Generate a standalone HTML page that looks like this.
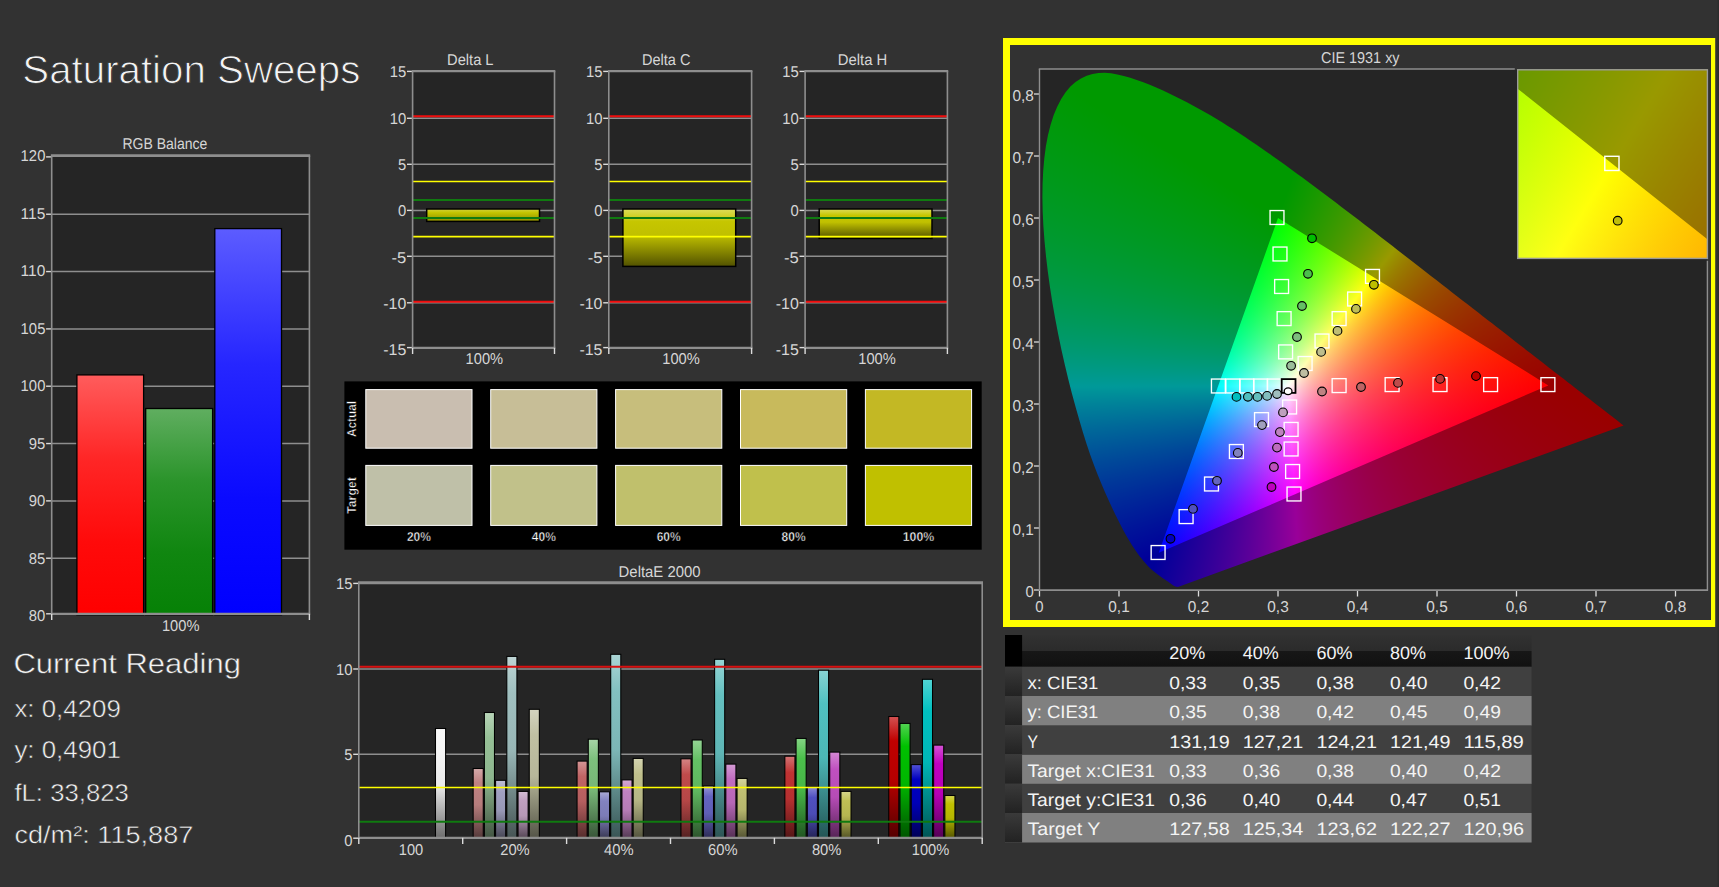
<!DOCTYPE html>
<html><head><meta charset="utf-8"><title>Saturation Sweeps</title>
<style>
html,body{margin:0;padding:0;background:#323232;overflow:hidden}
#p{position:relative;width:1719px;height:887px;overflow:hidden;background:#323232;font-family:"Liberation Sans", sans-serif}
svg{position:absolute;left:0;top:0;font-family:"Liberation Sans", sans-serif;text-rendering:geometricPrecision}
.c{position:absolute;overflow:hidden;background:#252525}
.l{position:absolute;left:0;top:0;right:0;bottom:0}
</style></head><body><div id="p">
<svg width="1719" height="887" viewBox="0 0 1719 887"><defs><linearGradient id="g1" x1="0" y1="0" x2="0" y2="1"><stop offset="0" stop-color="#ff5c5c"/><stop offset="0.35" stop-color="#ff2626"/><stop offset="0.7" stop-color="#ff0a0a"/><stop offset="1" stop-color="#ff0000"/></linearGradient><linearGradient id="g2" x1="0" y1="0" x2="0" y2="1"><stop offset="0" stop-color="#60ae60"/><stop offset="0.35" stop-color="#2b942b"/><stop offset="0.7" stop-color="#108610"/><stop offset="1" stop-color="#068106"/></linearGradient><linearGradient id="g3" x1="0" y1="0" x2="0" y2="1"><stop offset="0" stop-color="#5c5cff"/><stop offset="0.35" stop-color="#2626ff"/><stop offset="0.7" stop-color="#0a0aff"/><stop offset="1" stop-color="#0000ff"/></linearGradient><linearGradient id="g4" x1="0" y1="0" x2="0" y2="1"><stop offset="0" stop-color="#dcdc5a"/><stop offset="0.22" stop-color="#c6c600"/><stop offset="0.45" stop-color="#c0c000"/><stop offset="1" stop-color="#525200"/></linearGradient><linearGradient id="g5" x1="0" y1="0" x2="0" y2="1"><stop offset="0" stop-color="#d2d23c"/><stop offset="0.3" stop-color="#c4c400"/><stop offset="1" stop-color="#8c8c00"/></linearGradient><linearGradient id="g6" x1="0" y1="0" x2="0" y2="1"><stop offset="0" stop-color="#dcdc5a"/><stop offset="0.22" stop-color="#c6c600"/><stop offset="0.45" stop-color="#c0c000"/><stop offset="1" stop-color="#525200"/></linearGradient><linearGradient id="g7" x1="0" y1="0" x2="0" y2="1"><stop offset="0" stop-color="#dcdc5a"/><stop offset="0.22" stop-color="#c6c600"/><stop offset="0.45" stop-color="#c0c000"/><stop offset="1" stop-color="#525200"/></linearGradient><linearGradient id="g8" x1="0" y1="0" x2="0" y2="1"><stop offset="0" stop-color="#f9f9f9"/><stop offset="0.2" stop-color="#f6f6f6"/><stop offset="0.52" stop-color="#eaeaea"/><stop offset="1" stop-color="#6c6c6c"/></linearGradient><linearGradient id="g9" x1="0" y1="0" x2="0" y2="1"><stop offset="0" stop-color="#d4aaaa"/><stop offset="0.2" stop-color="#c08282"/><stop offset="0.52" stop-color="#b67c7c"/><stop offset="1" stop-color="#543939"/></linearGradient><linearGradient id="g10" x1="0" y1="0" x2="0" y2="1"><stop offset="0" stop-color="#b8d4b8"/><stop offset="0.2" stop-color="#96c096"/><stop offset="0.52" stop-color="#8eb68e"/><stop offset="1" stop-color="#425442"/></linearGradient><linearGradient id="g11" x1="0" y1="0" x2="0" y2="1"><stop offset="0" stop-color="#bebed4"/><stop offset="0.2" stop-color="#a0a0c0"/><stop offset="0.52" stop-color="#9898b6"/><stop offset="1" stop-color="#464654"/></linearGradient><linearGradient id="g12" x1="0" y1="0" x2="0" y2="1"><stop offset="0" stop-color="#bed4d4"/><stop offset="0.2" stop-color="#a0c0c0"/><stop offset="0.52" stop-color="#98b6b6"/><stop offset="1" stop-color="#465454"/></linearGradient><linearGradient id="g13" x1="0" y1="0" x2="0" y2="1"><stop offset="0" stop-color="#d4bed4"/><stop offset="0.2" stop-color="#c0a0c0"/><stop offset="0.52" stop-color="#b698b6"/><stop offset="1" stop-color="#544654"/></linearGradient><linearGradient id="g14" x1="0" y1="0" x2="0" y2="1"><stop offset="0" stop-color="#d4d4c0"/><stop offset="0.2" stop-color="#c0c0a2"/><stop offset="0.52" stop-color="#b6b69a"/><stop offset="1" stop-color="#545447"/></linearGradient><linearGradient id="g15" x1="0" y1="0" x2="0" y2="1"><stop offset="0" stop-color="#d49696"/><stop offset="0.2" stop-color="#c06464"/><stop offset="0.52" stop-color="#b65f5f"/><stop offset="1" stop-color="#542c2c"/></linearGradient><linearGradient id="g16" x1="0" y1="0" x2="0" y2="1"><stop offset="0" stop-color="#a7d4a7"/><stop offset="0.2" stop-color="#7dc07d"/><stop offset="0.52" stop-color="#77b677"/><stop offset="1" stop-color="#375437"/></linearGradient><linearGradient id="g17" x1="0" y1="0" x2="0" y2="1"><stop offset="0" stop-color="#aaaad4"/><stop offset="0.2" stop-color="#8282c0"/><stop offset="0.52" stop-color="#7c7cb6"/><stop offset="1" stop-color="#393954"/></linearGradient><linearGradient id="g18" x1="0" y1="0" x2="0" y2="1"><stop offset="0" stop-color="#aad4d4"/><stop offset="0.2" stop-color="#82c0c0"/><stop offset="0.52" stop-color="#7cb6b6"/><stop offset="1" stop-color="#395454"/></linearGradient><linearGradient id="g19" x1="0" y1="0" x2="0" y2="1"><stop offset="0" stop-color="#d4aad4"/><stop offset="0.2" stop-color="#c082c0"/><stop offset="0.52" stop-color="#b67cb6"/><stop offset="1" stop-color="#543954"/></linearGradient><linearGradient id="g20" x1="0" y1="0" x2="0" y2="1"><stop offset="0" stop-color="#d4d4b1"/><stop offset="0.2" stop-color="#c0c08c"/><stop offset="0.52" stop-color="#b6b685"/><stop offset="1" stop-color="#54543e"/></linearGradient><linearGradient id="g21" x1="0" y1="0" x2="0" y2="1"><stop offset="0" stop-color="#d48585"/><stop offset="0.2" stop-color="#c04b4b"/><stop offset="0.52" stop-color="#b64747"/><stop offset="1" stop-color="#542121"/></linearGradient><linearGradient id="g22" x1="0" y1="0" x2="0" y2="1"><stop offset="0" stop-color="#96d496"/><stop offset="0.2" stop-color="#64c064"/><stop offset="0.52" stop-color="#5fb65f"/><stop offset="1" stop-color="#2c542c"/></linearGradient><linearGradient id="g23" x1="0" y1="0" x2="0" y2="1"><stop offset="0" stop-color="#9696d4"/><stop offset="0.2" stop-color="#6464c0"/><stop offset="0.52" stop-color="#5f5fb6"/><stop offset="1" stop-color="#2c2c54"/></linearGradient><linearGradient id="g24" x1="0" y1="0" x2="0" y2="1"><stop offset="0" stop-color="#96d4d4"/><stop offset="0.2" stop-color="#64c0c0"/><stop offset="0.52" stop-color="#5fb6b6"/><stop offset="1" stop-color="#2c5454"/></linearGradient><linearGradient id="g25" x1="0" y1="0" x2="0" y2="1"><stop offset="0" stop-color="#d49bd4"/><stop offset="0.2" stop-color="#c06cc0"/><stop offset="0.52" stop-color="#b667b6"/><stop offset="1" stop-color="#543054"/></linearGradient><linearGradient id="g26" x1="0" y1="0" x2="0" y2="1"><stop offset="0" stop-color="#d4d4a0"/><stop offset="0.2" stop-color="#c0c073"/><stop offset="0.52" stop-color="#b6b66d"/><stop offset="1" stop-color="#545433"/></linearGradient><linearGradient id="g27" x1="0" y1="0" x2="0" y2="1"><stop offset="0" stop-color="#d47474"/><stop offset="0.2" stop-color="#c03232"/><stop offset="0.52" stop-color="#b63030"/><stop offset="1" stop-color="#541616"/></linearGradient><linearGradient id="g28" x1="0" y1="0" x2="0" y2="1"><stop offset="0" stop-color="#85d485"/><stop offset="0.2" stop-color="#4bc04b"/><stop offset="0.52" stop-color="#47b647"/><stop offset="1" stop-color="#215421"/></linearGradient><linearGradient id="g29" x1="0" y1="0" x2="0" y2="1"><stop offset="0" stop-color="#8888d4"/><stop offset="0.2" stop-color="#5050c0"/><stop offset="0.52" stop-color="#4c4cb6"/><stop offset="1" stop-color="#232354"/></linearGradient><linearGradient id="g30" x1="0" y1="0" x2="0" y2="1"><stop offset="0" stop-color="#88d4d4"/><stop offset="0.2" stop-color="#50c0c0"/><stop offset="0.52" stop-color="#4cb6b6"/><stop offset="1" stop-color="#235454"/></linearGradient><linearGradient id="g31" x1="0" y1="0" x2="0" y2="1"><stop offset="0" stop-color="#d488d4"/><stop offset="0.2" stop-color="#c050c0"/><stop offset="0.52" stop-color="#b64cb6"/><stop offset="1" stop-color="#542354"/></linearGradient><linearGradient id="g32" x1="0" y1="0" x2="0" y2="1"><stop offset="0" stop-color="#d4d48b"/><stop offset="0.2" stop-color="#c0c055"/><stop offset="0.52" stop-color="#b6b651"/><stop offset="1" stop-color="#545425"/></linearGradient><linearGradient id="g33" x1="0" y1="0" x2="0" y2="1"><stop offset="0" stop-color="#d45252"/><stop offset="0.2" stop-color="#c00000"/><stop offset="0.52" stop-color="#b60000"/><stop offset="1" stop-color="#540000"/></linearGradient><linearGradient id="g34" x1="0" y1="0" x2="0" y2="1"><stop offset="0" stop-color="#52d452"/><stop offset="0.2" stop-color="#00c000"/><stop offset="0.52" stop-color="#00b600"/><stop offset="1" stop-color="#005400"/></linearGradient><linearGradient id="g35" x1="0" y1="0" x2="0" y2="1"><stop offset="0" stop-color="#5252d4"/><stop offset="0.2" stop-color="#0000c0"/><stop offset="0.52" stop-color="#0000b6"/><stop offset="1" stop-color="#000054"/></linearGradient><linearGradient id="g36" x1="0" y1="0" x2="0" y2="1"><stop offset="0" stop-color="#52d4d4"/><stop offset="0.2" stop-color="#00c0c0"/><stop offset="0.52" stop-color="#00b6b6"/><stop offset="1" stop-color="#005454"/></linearGradient><linearGradient id="g37" x1="0" y1="0" x2="0" y2="1"><stop offset="0" stop-color="#d452d4"/><stop offset="0.2" stop-color="#c000c0"/><stop offset="0.52" stop-color="#b600b6"/><stop offset="1" stop-color="#540054"/></linearGradient><linearGradient id="g38" x1="0" y1="0" x2="0" y2="1"><stop offset="0" stop-color="#d4d452"/><stop offset="0.2" stop-color="#c0c000"/><stop offset="0.52" stop-color="#b6b600"/><stop offset="1" stop-color="#545400"/></linearGradient><linearGradient id="g39" x1="0" y1="0" x2="0" y2="1"><stop offset="0" stop-color="#313131"/><stop offset="0.49" stop-color="#2b2b2b"/><stop offset="0.51" stop-color="#171717"/><stop offset="1" stop-color="#111111"/></linearGradient><linearGradient id="g40" x1="0" y1="0" x2="0" y2="1"><stop offset="0" stop-color="#3a3a3a"/><stop offset="1" stop-color="#222222"/></linearGradient></defs>
<text x="22.3" y="83" font-size="39" fill="#f4f4f4" textLength="338" lengthAdjust="spacingAndGlyphs" stroke="#323232" stroke-width="0.9">Saturation Sweeps</text>
<rect x="51.7" y="155.6" width="257.7" height="458.2" fill="#252525"/>
<path d="M51.7 214.23H309.4" stroke="#8e8e8e" stroke-width="1.5"/>
<path d="M51.7 271.56H309.4" stroke="#8e8e8e" stroke-width="1.5"/>
<path d="M51.7 328.89H309.4" stroke="#8e8e8e" stroke-width="1.5"/>
<path d="M51.7 386.22H309.4" stroke="#8e8e8e" stroke-width="1.5"/>
<path d="M51.7 443.55H309.4" stroke="#8e8e8e" stroke-width="1.5"/>
<path d="M51.7 500.88H309.4" stroke="#8e8e8e" stroke-width="1.5"/>
<path d="M51.7 558.21H309.4" stroke="#8e8e8e" stroke-width="1.5"/>
<rect x="76.9" y="374.9" width="66.7" height="239.9" fill="url(#g1)" stroke="#000" stroke-width="1.3"/>
<rect x="145.7" y="408.5" width="66.9" height="206.3" fill="url(#g2)" stroke="#000" stroke-width="1.3"/>
<rect x="214.8" y="228.6" width="66.7" height="386.2" fill="url(#g3)" stroke="#000" stroke-width="1.3"/>
<path d="M50.9 155.6H310.2" stroke="#8e8e8e" stroke-width="2.9"/>
<path d="M50.9 613.8H310.2" stroke="#8e8e8e" stroke-width="2.2"/>
<path d="M51.7 155.6V613.8" stroke="#8e8e8e" stroke-width="1.6"/>
<path d="M309.4 155.6V613.8" stroke="#8e8e8e" stroke-width="1.6"/>
<path d="M46.1 156.9H50.9" stroke="#dcdcdc" stroke-width="1.4"/>
<text x="45.4" y="161" font-size="15.7" fill="#d6d6d6" text-anchor="end" textLength="24.79" lengthAdjust="spacingAndGlyphs">120</text>
<path d="M46.1 214.23H50.9" stroke="#dcdcdc" stroke-width="1.4"/>
<text x="45.4" y="218.5" font-size="15.7" fill="#d6d6d6" text-anchor="end" textLength="24.79" lengthAdjust="spacingAndGlyphs">115</text>
<path d="M46.1 271.56H50.9" stroke="#dcdcdc" stroke-width="1.4"/>
<text x="45.4" y="276" font-size="15.7" fill="#d6d6d6" text-anchor="end" textLength="24.79" lengthAdjust="spacingAndGlyphs">110</text>
<path d="M46.1 328.89H50.9" stroke="#dcdcdc" stroke-width="1.4"/>
<text x="45.4" y="333.5" font-size="15.7" fill="#d6d6d6" text-anchor="end" textLength="24.79" lengthAdjust="spacingAndGlyphs">105</text>
<path d="M46.1 386.22H50.9" stroke="#dcdcdc" stroke-width="1.4"/>
<text x="45.4" y="391" font-size="15.7" fill="#d6d6d6" text-anchor="end" textLength="24.79" lengthAdjust="spacingAndGlyphs">100</text>
<path d="M46.1 443.55H50.9" stroke="#dcdcdc" stroke-width="1.4"/>
<text x="45.4" y="448.5" font-size="15.7" fill="#d6d6d6" text-anchor="end" textLength="16.53" lengthAdjust="spacingAndGlyphs">95</text>
<path d="M46.1 500.88H50.9" stroke="#dcdcdc" stroke-width="1.4"/>
<text x="45.4" y="506" font-size="15.7" fill="#d6d6d6" text-anchor="end" textLength="16.53" lengthAdjust="spacingAndGlyphs">90</text>
<path d="M46.1 558.21H50.9" stroke="#dcdcdc" stroke-width="1.4"/>
<text x="45.4" y="563.5" font-size="15.7" fill="#d6d6d6" text-anchor="end" textLength="16.53" lengthAdjust="spacingAndGlyphs">85</text>
<path d="M46.1 613.8H50.9" stroke="#dcdcdc" stroke-width="1.4"/>
<text x="45.4" y="621" font-size="15.7" fill="#d6d6d6" text-anchor="end" textLength="16.53" lengthAdjust="spacingAndGlyphs">80</text>
<path d="M51.7 613.8V620" stroke="#dcdcdc" stroke-width="1.4"/>
<path d="M309.4 613.8V620" stroke="#dcdcdc" stroke-width="1.4"/>
<text x="164.9" y="148.8" font-size="15.7" fill="#d6d6d6" text-anchor="middle" textLength="85" lengthAdjust="spacingAndGlyphs">RGB Balance</text>
<text x="180.7" y="631" font-size="15.7" fill="#d6d6d6" text-anchor="middle" textLength="37.5" lengthAdjust="spacingAndGlyphs">100%</text>
<text x="13.4" y="673.3" font-size="28" fill="#f4f4f4" textLength="227.6" lengthAdjust="spacingAndGlyphs" stroke="#323232" stroke-width="0.5">Current Reading</text>
<text x="14.4" y="716.6" font-size="24.5" fill="#f4f4f4" textLength="106.5" lengthAdjust="spacingAndGlyphs" stroke="#323232" stroke-width="0.5">x: 0,4209</text>
<text x="14.4" y="758.4" font-size="24.5" fill="#f4f4f4" textLength="106.5" lengthAdjust="spacingAndGlyphs" stroke="#323232" stroke-width="0.5">y: 0,4901</text>
<text x="14.4" y="800.5" font-size="24.5" fill="#f4f4f4" textLength="114.5" lengthAdjust="spacingAndGlyphs" stroke="#323232" stroke-width="0.5">fL: 33,823</text>
<text x="14.4" y="842.7" font-size="24.5" fill="#f4f4f4" textLength="179" lengthAdjust="spacingAndGlyphs" stroke="#323232" stroke-width="0.5">cd/m²: 115,887</text>
<rect x="412.6" y="71.1" width="141.9" height="276.7" fill="#252525"/>
<path d="M412.6 118.3H554.5" stroke="#8e8e8e" stroke-width="1.5"/>
<path d="M412.6 164.3H554.5" stroke="#8e8e8e" stroke-width="1.5"/>
<path d="M412.6 210.4H554.5" stroke="#8e8e8e" stroke-width="1.5"/>
<path d="M412.6 256.3H554.5" stroke="#8e8e8e" stroke-width="1.5"/>
<path d="M412.6 302.8H554.5" stroke="#8e8e8e" stroke-width="1.5"/>
<rect x="426.7" y="209" width="112.8" height="12.4" fill="url(#g5)" stroke="#000" stroke-width="1.5"/>
<path d="M412.6 116.3H554.5" stroke="#f00c0c" stroke-width="1.9"/>
<path d="M412.6 301.8H554.5" stroke="#f00c0c" stroke-width="1.9"/>
<path d="M412.6 181.5H554.5" stroke="#ffff00" stroke-width="1.6"/>
<path d="M412.6 236.6H554.5" stroke="#ffff00" stroke-width="1.6"/>
<path d="M412.6 199.9H554.5" stroke="#107a10" stroke-width="2"/>
<path d="M412.6 218H554.5" stroke="#107a10" stroke-width="2"/>
<path d="M411.8 71.1H555.3" stroke="#8e8e8e" stroke-width="2.1"/>
<path d="M411.8 347.8H555.3" stroke="#8e8e8e" stroke-width="2.2"/>
<path d="M412.6 71.1V347.8" stroke="#8e8e8e" stroke-width="1.6"/>
<path d="M554.5 71.1V347.8" stroke="#8e8e8e" stroke-width="1.6"/>
<path d="M407 71.4H411.8" stroke="#dcdcdc" stroke-width="1.4"/>
<text x="406.3" y="77.45" font-size="15.7" fill="#d6d6d6" text-anchor="end" textLength="16.53" lengthAdjust="spacingAndGlyphs">15</text>
<path d="M407 118.3H411.8" stroke="#dcdcdc" stroke-width="1.4"/>
<text x="406.3" y="123.72" font-size="15.7" fill="#d6d6d6" text-anchor="end" textLength="16.53" lengthAdjust="spacingAndGlyphs">10</text>
<path d="M407 164.3H411.8" stroke="#dcdcdc" stroke-width="1.4"/>
<text x="406.3" y="170" font-size="15.7" fill="#d6d6d6" text-anchor="end" textLength="8.26" lengthAdjust="spacingAndGlyphs">5</text>
<path d="M407 210.4H411.8" stroke="#dcdcdc" stroke-width="1.4"/>
<text x="406.3" y="216.28" font-size="15.7" fill="#d6d6d6" text-anchor="end" textLength="8.26" lengthAdjust="spacingAndGlyphs">0</text>
<path d="M407 256.3H411.8" stroke="#dcdcdc" stroke-width="1.4"/>
<text x="406.3" y="262.55" font-size="15.7" fill="#d6d6d6" text-anchor="end" textLength="14.8" lengthAdjust="spacingAndGlyphs">-5</text>
<path d="M407 302.8H411.8" stroke="#dcdcdc" stroke-width="1.4"/>
<text x="406.3" y="308.83" font-size="15.7" fill="#d6d6d6" text-anchor="end" textLength="23.06" lengthAdjust="spacingAndGlyphs">-10</text>
<path d="M407 347.6H411.8" stroke="#dcdcdc" stroke-width="1.4"/>
<text x="406.3" y="355.1" font-size="15.7" fill="#d6d6d6" text-anchor="end" textLength="23.06" lengthAdjust="spacingAndGlyphs">-15</text>
<path d="M412.6 347.8V354" stroke="#dcdcdc" stroke-width="1.4"/>
<path d="M554.5 347.8V354" stroke="#dcdcdc" stroke-width="1.4"/>
<text x="470.3" y="64.8" font-size="15.7" fill="#d6d6d6" text-anchor="middle" textLength="46.5" lengthAdjust="spacingAndGlyphs">Delta L</text>
<text x="484.35" y="363.8" font-size="15.7" fill="#d6d6d6" text-anchor="middle" textLength="37.5" lengthAdjust="spacingAndGlyphs">100%</text>
<rect x="608.8" y="71.1" width="142.8" height="276.7" fill="#252525"/>
<path d="M608.8 118.3H751.6" stroke="#8e8e8e" stroke-width="1.5"/>
<path d="M608.8 164.3H751.6" stroke="#8e8e8e" stroke-width="1.5"/>
<path d="M608.8 210.4H751.6" stroke="#8e8e8e" stroke-width="1.5"/>
<path d="M608.8 256.3H751.6" stroke="#8e8e8e" stroke-width="1.5"/>
<path d="M608.8 302.8H751.6" stroke="#8e8e8e" stroke-width="1.5"/>
<rect x="622.9" y="209" width="112.8" height="57.4" fill="url(#g6)" stroke="#000" stroke-width="1.5"/>
<path d="M608.8 116.3H751.6" stroke="#f00c0c" stroke-width="1.9"/>
<path d="M608.8 301.8H751.6" stroke="#f00c0c" stroke-width="1.9"/>
<path d="M608.8 181.5H751.6" stroke="#ffff00" stroke-width="1.6"/>
<path d="M608.8 236.6H751.6" stroke="#ffff00" stroke-width="1.6"/>
<path d="M608.8 199.9H751.6" stroke="#107a10" stroke-width="2"/>
<path d="M608.8 218H751.6" stroke="#107a10" stroke-width="2"/>
<path d="M608 71.1H752.4" stroke="#8e8e8e" stroke-width="2.1"/>
<path d="M608 347.8H752.4" stroke="#8e8e8e" stroke-width="2.2"/>
<path d="M608.8 71.1V347.8" stroke="#8e8e8e" stroke-width="1.6"/>
<path d="M751.6 71.1V347.8" stroke="#8e8e8e" stroke-width="1.6"/>
<path d="M603.2 71.4H608" stroke="#dcdcdc" stroke-width="1.4"/>
<text x="602.5" y="77.45" font-size="15.7" fill="#d6d6d6" text-anchor="end" textLength="16.53" lengthAdjust="spacingAndGlyphs">15</text>
<path d="M603.2 118.3H608" stroke="#dcdcdc" stroke-width="1.4"/>
<text x="602.5" y="123.72" font-size="15.7" fill="#d6d6d6" text-anchor="end" textLength="16.53" lengthAdjust="spacingAndGlyphs">10</text>
<path d="M603.2 164.3H608" stroke="#dcdcdc" stroke-width="1.4"/>
<text x="602.5" y="170" font-size="15.7" fill="#d6d6d6" text-anchor="end" textLength="8.26" lengthAdjust="spacingAndGlyphs">5</text>
<path d="M603.2 210.4H608" stroke="#dcdcdc" stroke-width="1.4"/>
<text x="602.5" y="216.28" font-size="15.7" fill="#d6d6d6" text-anchor="end" textLength="8.26" lengthAdjust="spacingAndGlyphs">0</text>
<path d="M603.2 256.3H608" stroke="#dcdcdc" stroke-width="1.4"/>
<text x="602.5" y="262.55" font-size="15.7" fill="#d6d6d6" text-anchor="end" textLength="14.8" lengthAdjust="spacingAndGlyphs">-5</text>
<path d="M603.2 302.8H608" stroke="#dcdcdc" stroke-width="1.4"/>
<text x="602.5" y="308.83" font-size="15.7" fill="#d6d6d6" text-anchor="end" textLength="23.06" lengthAdjust="spacingAndGlyphs">-10</text>
<path d="M603.2 347.6H608" stroke="#dcdcdc" stroke-width="1.4"/>
<text x="602.5" y="355.1" font-size="15.7" fill="#d6d6d6" text-anchor="end" textLength="23.06" lengthAdjust="spacingAndGlyphs">-15</text>
<path d="M608.8 347.8V354" stroke="#dcdcdc" stroke-width="1.4"/>
<path d="M751.6 347.8V354" stroke="#dcdcdc" stroke-width="1.4"/>
<text x="666.2" y="64.8" font-size="15.7" fill="#d6d6d6" text-anchor="middle" textLength="48.5" lengthAdjust="spacingAndGlyphs">Delta C</text>
<text x="681" y="363.8" font-size="15.7" fill="#d6d6d6" text-anchor="middle" textLength="37.5" lengthAdjust="spacingAndGlyphs">100%</text>
<rect x="805.1" y="71.1" width="142.3" height="276.7" fill="#252525"/>
<path d="M805.1 118.3H947.4" stroke="#8e8e8e" stroke-width="1.5"/>
<path d="M805.1 164.3H947.4" stroke="#8e8e8e" stroke-width="1.5"/>
<path d="M805.1 210.4H947.4" stroke="#8e8e8e" stroke-width="1.5"/>
<path d="M805.1 256.3H947.4" stroke="#8e8e8e" stroke-width="1.5"/>
<path d="M805.1 302.8H947.4" stroke="#8e8e8e" stroke-width="1.5"/>
<rect x="819.2" y="209" width="112.8" height="29.4" fill="url(#g7)" stroke="#000" stroke-width="1.5"/>
<path d="M805.1 116.3H947.4" stroke="#f00c0c" stroke-width="1.9"/>
<path d="M805.1 301.8H947.4" stroke="#f00c0c" stroke-width="1.9"/>
<path d="M805.1 181.5H947.4" stroke="#ffff00" stroke-width="1.6"/>
<path d="M805.1 236.6H947.4" stroke="#ffff00" stroke-width="1.6"/>
<path d="M805.1 199.9H947.4" stroke="#107a10" stroke-width="2"/>
<path d="M805.1 218H947.4" stroke="#107a10" stroke-width="2"/>
<path d="M804.3 71.1H948.2" stroke="#8e8e8e" stroke-width="2.1"/>
<path d="M804.3 347.8H948.2" stroke="#8e8e8e" stroke-width="2.2"/>
<path d="M805.1 71.1V347.8" stroke="#8e8e8e" stroke-width="1.6"/>
<path d="M947.4 71.1V347.8" stroke="#8e8e8e" stroke-width="1.6"/>
<path d="M799.5 71.4H804.3" stroke="#dcdcdc" stroke-width="1.4"/>
<text x="798.8" y="77.45" font-size="15.7" fill="#d6d6d6" text-anchor="end" textLength="16.53" lengthAdjust="spacingAndGlyphs">15</text>
<path d="M799.5 118.3H804.3" stroke="#dcdcdc" stroke-width="1.4"/>
<text x="798.8" y="123.72" font-size="15.7" fill="#d6d6d6" text-anchor="end" textLength="16.53" lengthAdjust="spacingAndGlyphs">10</text>
<path d="M799.5 164.3H804.3" stroke="#dcdcdc" stroke-width="1.4"/>
<text x="798.8" y="170" font-size="15.7" fill="#d6d6d6" text-anchor="end" textLength="8.26" lengthAdjust="spacingAndGlyphs">5</text>
<path d="M799.5 210.4H804.3" stroke="#dcdcdc" stroke-width="1.4"/>
<text x="798.8" y="216.28" font-size="15.7" fill="#d6d6d6" text-anchor="end" textLength="8.26" lengthAdjust="spacingAndGlyphs">0</text>
<path d="M799.5 256.3H804.3" stroke="#dcdcdc" stroke-width="1.4"/>
<text x="798.8" y="262.55" font-size="15.7" fill="#d6d6d6" text-anchor="end" textLength="14.8" lengthAdjust="spacingAndGlyphs">-5</text>
<path d="M799.5 302.8H804.3" stroke="#dcdcdc" stroke-width="1.4"/>
<text x="798.8" y="308.83" font-size="15.7" fill="#d6d6d6" text-anchor="end" textLength="23.06" lengthAdjust="spacingAndGlyphs">-10</text>
<path d="M799.5 347.6H804.3" stroke="#dcdcdc" stroke-width="1.4"/>
<text x="798.8" y="355.1" font-size="15.7" fill="#d6d6d6" text-anchor="end" textLength="23.06" lengthAdjust="spacingAndGlyphs">-15</text>
<path d="M805.1 347.8V354" stroke="#dcdcdc" stroke-width="1.4"/>
<path d="M947.4 347.8V354" stroke="#dcdcdc" stroke-width="1.4"/>
<text x="862.5" y="64.8" font-size="15.7" fill="#d6d6d6" text-anchor="middle" textLength="49.5" lengthAdjust="spacingAndGlyphs">Delta H</text>
<text x="877.05" y="363.8" font-size="15.7" fill="#d6d6d6" text-anchor="middle" textLength="37.5" lengthAdjust="spacingAndGlyphs">100%</text>
<rect x="344.4" y="381.4" width="637.3" height="168.3" fill="#000"/>
<rect x="365.8" y="389.6" width="106.2" height="58.6" fill="#c9beb0" stroke="#fff" stroke-width="1"/>
<rect x="365.8" y="465.4" width="106.2" height="60" fill="#bfc0a8" stroke="#fff" stroke-width="1"/>
<text x="418.9" y="541.3" font-size="12.9" fill="#fff" text-anchor="middle" textLength="24" lengthAdjust="spacingAndGlyphs" font-weight="bold" stroke="#000" stroke-width="0.45">20%</text>
<rect x="490.7" y="389.6" width="106.2" height="58.6" fill="#c7be97" stroke="#fff" stroke-width="1"/>
<rect x="490.7" y="465.4" width="106.2" height="60" fill="#c1c18a" stroke="#fff" stroke-width="1"/>
<text x="543.8" y="541.3" font-size="12.9" fill="#fff" text-anchor="middle" textLength="24" lengthAdjust="spacingAndGlyphs" font-weight="bold" stroke="#000" stroke-width="0.45">40%</text>
<rect x="615.6" y="389.6" width="106.2" height="58.6" fill="#c7be7c" stroke="#fff" stroke-width="1"/>
<rect x="615.6" y="465.4" width="106.2" height="60" fill="#c0c06c" stroke="#fff" stroke-width="1"/>
<text x="668.7" y="541.3" font-size="12.9" fill="#fff" text-anchor="middle" textLength="24" lengthAdjust="spacingAndGlyphs" font-weight="bold" stroke="#000" stroke-width="0.45">60%</text>
<rect x="740.5" y="389.6" width="106.2" height="58.6" fill="#c8ba5c" stroke="#fff" stroke-width="1"/>
<rect x="740.5" y="465.4" width="106.2" height="60" fill="#c0c04c" stroke="#fff" stroke-width="1"/>
<text x="793.6" y="541.3" font-size="12.9" fill="#fff" text-anchor="middle" textLength="24" lengthAdjust="spacingAndGlyphs" font-weight="bold" stroke="#000" stroke-width="0.45">80%</text>
<rect x="865.4" y="389.6" width="106.2" height="58.6" fill="#c3b824" stroke="#fff" stroke-width="1"/>
<rect x="865.4" y="465.4" width="106.2" height="60" fill="#c0c000" stroke="#fff" stroke-width="1"/>
<text x="918.5" y="541.3" font-size="12.9" fill="#fff" text-anchor="middle" textLength="31.5" lengthAdjust="spacingAndGlyphs" font-weight="bold" stroke="#000" stroke-width="0.45">100%</text>
<text transform="translate(356.4,419) rotate(-90)" font-size="12.9" font-weight="bold" fill="#fff" stroke="#000" stroke-width="0.45" text-anchor="middle" textLength="36" lengthAdjust="spacingAndGlyphs">Actual</text>
<text transform="translate(356.4,495.5) rotate(-90)" font-size="12.9" font-weight="bold" fill="#fff" stroke="#000" stroke-width="0.45" text-anchor="middle" textLength="36.5" lengthAdjust="spacingAndGlyphs">Target</text>
<rect x="358.8" y="582.8" width="623.4" height="255" fill="#252525"/>
<path d="M358.8 669H982.2" stroke="#8e8e8e" stroke-width="1.5"/>
<path d="M358.8 754.3H982.2" stroke="#8e8e8e" stroke-width="1.5"/>
<rect x="435.5" y="728.5" width="10.1" height="109.8" fill="url(#g8)" stroke="#000" stroke-width="1.05"/>
<rect x="473.15" y="768.5" width="10.1" height="69.8" fill="url(#g9)" stroke="#000" stroke-width="1.05"/>
<rect x="484.37" y="712.5" width="10.1" height="125.8" fill="url(#g10)" stroke="#000" stroke-width="1.05"/>
<rect x="495.59" y="780.3" width="10.1" height="58" fill="url(#g11)" stroke="#000" stroke-width="1.05"/>
<rect x="506.81" y="656.4" width="10.1" height="181.9" fill="url(#g12)" stroke="#000" stroke-width="1.05"/>
<rect x="518.03" y="791.4" width="10.1" height="46.9" fill="url(#g13)" stroke="#000" stroke-width="1.05"/>
<rect x="529.25" y="709.3" width="10.1" height="129" fill="url(#g14)" stroke="#000" stroke-width="1.05"/>
<rect x="577.05" y="761.1" width="10.1" height="77.2" fill="url(#g15)" stroke="#000" stroke-width="1.05"/>
<rect x="588.27" y="739.2" width="10.1" height="99.1" fill="url(#g16)" stroke="#000" stroke-width="1.05"/>
<rect x="599.49" y="791.8" width="10.1" height="46.5" fill="url(#g17)" stroke="#000" stroke-width="1.05"/>
<rect x="610.71" y="654.3" width="10.1" height="184" fill="url(#g18)" stroke="#000" stroke-width="1.05"/>
<rect x="621.93" y="779.9" width="10.1" height="58.4" fill="url(#g19)" stroke="#000" stroke-width="1.05"/>
<rect x="633.15" y="758.4" width="10.1" height="79.9" fill="url(#g20)" stroke="#000" stroke-width="1.05"/>
<rect x="680.95" y="758.8" width="10.1" height="79.5" fill="url(#g21)" stroke="#000" stroke-width="1.05"/>
<rect x="692.17" y="740" width="10.1" height="98.3" fill="url(#g22)" stroke="#000" stroke-width="1.05"/>
<rect x="703.39" y="786" width="10.1" height="52.3" fill="url(#g23)" stroke="#000" stroke-width="1.05"/>
<rect x="714.61" y="659.3" width="10.1" height="179" fill="url(#g24)" stroke="#000" stroke-width="1.05"/>
<rect x="725.83" y="764.1" width="10.1" height="74.2" fill="url(#g25)" stroke="#000" stroke-width="1.05"/>
<rect x="737.05" y="778.4" width="10.1" height="59.9" fill="url(#g26)" stroke="#000" stroke-width="1.05"/>
<rect x="784.85" y="756.2" width="10.1" height="82.1" fill="url(#g27)" stroke="#000" stroke-width="1.05"/>
<rect x="796.07" y="738.4" width="10.1" height="99.9" fill="url(#g28)" stroke="#000" stroke-width="1.05"/>
<rect x="807.29" y="787.4" width="10.1" height="50.9" fill="url(#g29)" stroke="#000" stroke-width="1.05"/>
<rect x="818.51" y="670.2" width="10.1" height="168.1" fill="url(#g30)" stroke="#000" stroke-width="1.05"/>
<rect x="829.73" y="752.1" width="10.1" height="86.2" fill="url(#g31)" stroke="#000" stroke-width="1.05"/>
<rect x="840.95" y="791.4" width="10.1" height="46.9" fill="url(#g32)" stroke="#000" stroke-width="1.05"/>
<rect x="888.75" y="716.5" width="10.1" height="121.8" fill="url(#g33)" stroke="#000" stroke-width="1.05"/>
<rect x="899.97" y="723.4" width="10.1" height="114.9" fill="url(#g34)" stroke="#000" stroke-width="1.05"/>
<rect x="911.19" y="764.6" width="10.1" height="73.7" fill="url(#g35)" stroke="#000" stroke-width="1.05"/>
<rect x="922.41" y="679.3" width="10.1" height="159" fill="url(#g36)" stroke="#000" stroke-width="1.05"/>
<rect x="933.63" y="745.1" width="10.1" height="93.2" fill="url(#g37)" stroke="#000" stroke-width="1.05"/>
<rect x="944.85" y="795.5" width="10.1" height="42.8" fill="url(#g38)" stroke="#000" stroke-width="1.05"/>
<path d="M358.8 666.8H982.2" stroke="#d81010" stroke-width="2.1"/>
<path d="M358.8 787.5H982.2" stroke="#ffff00" stroke-width="1.7"/>
<path d="M358.8 821.7H982.2" stroke="#0f7a0f" stroke-width="2.1"/>
<path d="M358 582.8H983" stroke="#8e8e8e" stroke-width="3"/>
<path d="M358 837.8H983" stroke="#8e8e8e" stroke-width="2.2"/>
<path d="M358.8 582.8V837.8" stroke="#8e8e8e" stroke-width="1.6"/>
<path d="M982.2 582.8V837.8" stroke="#8e8e8e" stroke-width="1.6"/>
<path d="M353.2 583.4H358" stroke="#dcdcdc" stroke-width="1.4"/>
<text x="352.5" y="589.1" font-size="15.7" fill="#d6d6d6" text-anchor="end" textLength="16.53" lengthAdjust="spacingAndGlyphs">15</text>
<path d="M353.2 669H358" stroke="#dcdcdc" stroke-width="1.4"/>
<text x="352.5" y="674.73" font-size="15.7" fill="#d6d6d6" text-anchor="end" textLength="16.53" lengthAdjust="spacingAndGlyphs">10</text>
<path d="M353.2 754.3H358" stroke="#dcdcdc" stroke-width="1.4"/>
<text x="352.5" y="760.36" font-size="15.7" fill="#d6d6d6" text-anchor="end" textLength="8.26" lengthAdjust="spacingAndGlyphs">5</text>
<path d="M353.2 838.2H358" stroke="#dcdcdc" stroke-width="1.4"/>
<text x="352.5" y="845.99" font-size="15.7" fill="#d6d6d6" text-anchor="end" textLength="8.26" lengthAdjust="spacingAndGlyphs">0</text>
<path d="M358.8 837.8V844" stroke="#dcdcdc" stroke-width="1.4"/>
<path d="M462.7 837.8V844" stroke="#dcdcdc" stroke-width="1.4"/>
<path d="M566.6 837.8V844" stroke="#dcdcdc" stroke-width="1.4"/>
<path d="M670.5 837.8V844" stroke="#dcdcdc" stroke-width="1.4"/>
<path d="M774.4 837.8V844" stroke="#dcdcdc" stroke-width="1.4"/>
<path d="M878.3 837.8V844" stroke="#dcdcdc" stroke-width="1.4"/>
<path d="M982.2 837.8V844" stroke="#dcdcdc" stroke-width="1.4"/>
<text x="659.6" y="576.6" font-size="15.7" fill="#d6d6d6" text-anchor="middle" textLength="82" lengthAdjust="spacingAndGlyphs">DeltaE 2000</text>
<text x="411.05" y="854.8" font-size="15.7" fill="#d6d6d6" text-anchor="middle" textLength="24.5" lengthAdjust="spacingAndGlyphs">100</text>
<text x="514.95" y="854.8" font-size="15.7" fill="#d6d6d6" text-anchor="middle" textLength="29.5" lengthAdjust="spacingAndGlyphs">20%</text>
<text x="618.85" y="854.8" font-size="15.7" fill="#d6d6d6" text-anchor="middle" textLength="29.5" lengthAdjust="spacingAndGlyphs">40%</text>
<text x="722.75" y="854.8" font-size="15.7" fill="#d6d6d6" text-anchor="middle" textLength="29.5" lengthAdjust="spacingAndGlyphs">60%</text>
<text x="826.65" y="854.8" font-size="15.7" fill="#d6d6d6" text-anchor="middle" textLength="29.5" lengthAdjust="spacingAndGlyphs">80%</text>
<text x="930.55" y="854.8" font-size="15.7" fill="#d6d6d6" text-anchor="middle" textLength="37.5" lengthAdjust="spacingAndGlyphs">100%</text>
<rect x="1003" y="38" width="712" height="7" fill="#ffff00"/>
<rect x="1003" y="620" width="712" height="7" fill="#ffff00"/>
<rect x="1003" y="38" width="7" height="589" fill="#ffff00"/>
<rect x="1711" y="38" width="4.2" height="589" fill="#ffff00"/>
<rect x="1717.6" y="0" width="1.4" height="887" fill="#2c2c2c"/>
<rect x="1039.5" y="69" width="667.9" height="521" fill="#252525"/>
<text x="1360.3" y="63.4" font-size="15.7" fill="#d6d6d6" text-anchor="middle" textLength="78.5" lengthAdjust="spacingAndGlyphs">CIE 1931 xy</text>
<path d="M1034 590H1039" stroke="#dcdcdc" stroke-width="1.3"/>
<text x="1033.8" y="597.2" font-size="15.7" fill="#d6d6d6" text-anchor="end" textLength="8.3" lengthAdjust="spacingAndGlyphs">0</text>
<path d="M1039.5 590.5V596.5" stroke="#dcdcdc" stroke-width="1.3"/>
<text x="1039.5" y="612.3" font-size="15.7" fill="#d6d6d6" text-anchor="middle" textLength="8.3" lengthAdjust="spacingAndGlyphs">0</text>
<path d="M1034 528H1039" stroke="#dcdcdc" stroke-width="1.3"/>
<text x="1033.8" y="535.2" font-size="15.7" fill="#d6d6d6" text-anchor="end" textLength="21.4" lengthAdjust="spacingAndGlyphs">0,1</text>
<path d="M1119 590.5V596.5" stroke="#dcdcdc" stroke-width="1.3"/>
<text x="1119" y="612.3" font-size="15.7" fill="#d6d6d6" text-anchor="middle" textLength="21.4" lengthAdjust="spacingAndGlyphs">0,1</text>
<path d="M1034 466H1039" stroke="#dcdcdc" stroke-width="1.3"/>
<text x="1033.8" y="473.2" font-size="15.7" fill="#d6d6d6" text-anchor="end" textLength="21.4" lengthAdjust="spacingAndGlyphs">0,2</text>
<path d="M1198.5 590.5V596.5" stroke="#dcdcdc" stroke-width="1.3"/>
<text x="1198.5" y="612.3" font-size="15.7" fill="#d6d6d6" text-anchor="middle" textLength="21.4" lengthAdjust="spacingAndGlyphs">0,2</text>
<path d="M1034 404H1039" stroke="#dcdcdc" stroke-width="1.3"/>
<text x="1033.8" y="411.2" font-size="15.7" fill="#d6d6d6" text-anchor="end" textLength="21.4" lengthAdjust="spacingAndGlyphs">0,3</text>
<path d="M1278 590.5V596.5" stroke="#dcdcdc" stroke-width="1.3"/>
<text x="1278" y="612.3" font-size="15.7" fill="#d6d6d6" text-anchor="middle" textLength="21.4" lengthAdjust="spacingAndGlyphs">0,3</text>
<path d="M1034 342H1039" stroke="#dcdcdc" stroke-width="1.3"/>
<text x="1033.8" y="349.2" font-size="15.7" fill="#d6d6d6" text-anchor="end" textLength="21.4" lengthAdjust="spacingAndGlyphs">0,4</text>
<path d="M1357.5 590.5V596.5" stroke="#dcdcdc" stroke-width="1.3"/>
<text x="1357.5" y="612.3" font-size="15.7" fill="#d6d6d6" text-anchor="middle" textLength="21.4" lengthAdjust="spacingAndGlyphs">0,4</text>
<path d="M1034 280H1039" stroke="#dcdcdc" stroke-width="1.3"/>
<text x="1033.8" y="287.2" font-size="15.7" fill="#d6d6d6" text-anchor="end" textLength="21.4" lengthAdjust="spacingAndGlyphs">0,5</text>
<path d="M1437 590.5V596.5" stroke="#dcdcdc" stroke-width="1.3"/>
<text x="1437" y="612.3" font-size="15.7" fill="#d6d6d6" text-anchor="middle" textLength="21.4" lengthAdjust="spacingAndGlyphs">0,5</text>
<path d="M1034 218H1039" stroke="#dcdcdc" stroke-width="1.3"/>
<text x="1033.8" y="225.2" font-size="15.7" fill="#d6d6d6" text-anchor="end" textLength="21.4" lengthAdjust="spacingAndGlyphs">0,6</text>
<path d="M1516.5 590.5V596.5" stroke="#dcdcdc" stroke-width="1.3"/>
<text x="1516.5" y="612.3" font-size="15.7" fill="#d6d6d6" text-anchor="middle" textLength="21.4" lengthAdjust="spacingAndGlyphs">0,6</text>
<path d="M1034 156H1039" stroke="#dcdcdc" stroke-width="1.3"/>
<text x="1033.8" y="163.2" font-size="15.7" fill="#d6d6d6" text-anchor="end" textLength="21.4" lengthAdjust="spacingAndGlyphs">0,7</text>
<path d="M1596 590.5V596.5" stroke="#dcdcdc" stroke-width="1.3"/>
<text x="1596" y="612.3" font-size="15.7" fill="#d6d6d6" text-anchor="middle" textLength="21.4" lengthAdjust="spacingAndGlyphs">0,7</text>
<path d="M1034 94H1039" stroke="#dcdcdc" stroke-width="1.3"/>
<text x="1033.8" y="101.2" font-size="15.7" fill="#d6d6d6" text-anchor="end" textLength="21.4" lengthAdjust="spacingAndGlyphs">0,8</text>
<path d="M1675.5 590.5V596.5" stroke="#dcdcdc" stroke-width="1.3"/>
<text x="1675.5" y="612.3" font-size="15.7" fill="#d6d6d6" text-anchor="middle" textLength="21.4" lengthAdjust="spacingAndGlyphs">0,8</text>
<rect x="1005" y="635" width="526.6" height="31.8" fill="url(#g39)"/>
<rect x="1005" y="635" width="17.1" height="31.8" fill="#000"/>
<text x="1169.3" y="658.6" font-size="18" fill="#f4f4f4" textLength="36" lengthAdjust="spacingAndGlyphs">20%</text>
<text x="1242.8" y="658.6" font-size="18" fill="#f4f4f4" textLength="36" lengthAdjust="spacingAndGlyphs">40%</text>
<text x="1316.4" y="658.6" font-size="18" fill="#f4f4f4" textLength="36" lengthAdjust="spacingAndGlyphs">60%</text>
<text x="1389.9" y="658.6" font-size="18" fill="#f4f4f4" textLength="36" lengthAdjust="spacingAndGlyphs">80%</text>
<text x="1463.4" y="658.6" font-size="18" fill="#f4f4f4" textLength="46" lengthAdjust="spacingAndGlyphs">100%</text>
<rect x="1005" y="666.8" width="526.6" height="29.2" fill="#404040"/>
<rect x="1005" y="666.8" width="17.1" height="29.2" fill="url(#g40)"/>
<text x="1027.4" y="689" font-size="18" fill="#f4f4f4" textLength="71" lengthAdjust="spacingAndGlyphs">x: CIE31</text>
<text x="1169.3" y="689" font-size="18" fill="#f4f4f4" textLength="37.5" lengthAdjust="spacingAndGlyphs">0,33</text>
<text x="1242.8" y="689" font-size="18" fill="#f4f4f4" textLength="37.5" lengthAdjust="spacingAndGlyphs">0,35</text>
<text x="1316.4" y="689" font-size="18" fill="#f4f4f4" textLength="37.5" lengthAdjust="spacingAndGlyphs">0,38</text>
<text x="1389.9" y="689" font-size="18" fill="#f4f4f4" textLength="37.5" lengthAdjust="spacingAndGlyphs">0,40</text>
<text x="1463.4" y="689" font-size="18" fill="#f4f4f4" textLength="37.5" lengthAdjust="spacingAndGlyphs">0,42</text>
<rect x="1005" y="696" width="526.6" height="29.6" fill="#808080"/>
<rect x="1005" y="696" width="17.1" height="29.6" fill="url(#g40)"/>
<text x="1027.4" y="718.2" font-size="18" fill="#f4f4f4" textLength="71" lengthAdjust="spacingAndGlyphs">y: CIE31</text>
<text x="1169.3" y="718.2" font-size="18" fill="#f4f4f4" textLength="37.5" lengthAdjust="spacingAndGlyphs">0,35</text>
<text x="1242.8" y="718.2" font-size="18" fill="#f4f4f4" textLength="37.5" lengthAdjust="spacingAndGlyphs">0,38</text>
<text x="1316.4" y="718.2" font-size="18" fill="#f4f4f4" textLength="37.5" lengthAdjust="spacingAndGlyphs">0,42</text>
<text x="1389.9" y="718.2" font-size="18" fill="#f4f4f4" textLength="37.5" lengthAdjust="spacingAndGlyphs">0,45</text>
<text x="1463.4" y="718.2" font-size="18" fill="#f4f4f4" textLength="37.5" lengthAdjust="spacingAndGlyphs">0,49</text>
<rect x="1005" y="725.6" width="526.6" height="29.2" fill="#404040"/>
<rect x="1005" y="725.6" width="17.1" height="29.2" fill="url(#g40)"/>
<text x="1027.4" y="747.8" font-size="18" fill="#f4f4f4" textLength="10.5" lengthAdjust="spacingAndGlyphs">Y</text>
<text x="1169.3" y="747.8" font-size="18" fill="#f4f4f4" textLength="60.5" lengthAdjust="spacingAndGlyphs">131,19</text>
<text x="1242.8" y="747.8" font-size="18" fill="#f4f4f4" textLength="60.5" lengthAdjust="spacingAndGlyphs">127,21</text>
<text x="1316.4" y="747.8" font-size="18" fill="#f4f4f4" textLength="60.5" lengthAdjust="spacingAndGlyphs">124,21</text>
<text x="1389.9" y="747.8" font-size="18" fill="#f4f4f4" textLength="60.5" lengthAdjust="spacingAndGlyphs">121,49</text>
<text x="1463.4" y="747.8" font-size="18" fill="#f4f4f4" textLength="60.5" lengthAdjust="spacingAndGlyphs">115,89</text>
<rect x="1005" y="754.8" width="526.6" height="29.1" fill="#808080"/>
<rect x="1005" y="754.8" width="17.1" height="29.1" fill="url(#g40)"/>
<text x="1027.4" y="777" font-size="18" fill="#f4f4f4" textLength="127.5" lengthAdjust="spacingAndGlyphs">Target x:CIE31</text>
<text x="1169.3" y="777" font-size="18" fill="#f4f4f4" textLength="37.5" lengthAdjust="spacingAndGlyphs">0,33</text>
<text x="1242.8" y="777" font-size="18" fill="#f4f4f4" textLength="37.5" lengthAdjust="spacingAndGlyphs">0,36</text>
<text x="1316.4" y="777" font-size="18" fill="#f4f4f4" textLength="37.5" lengthAdjust="spacingAndGlyphs">0,38</text>
<text x="1389.9" y="777" font-size="18" fill="#f4f4f4" textLength="37.5" lengthAdjust="spacingAndGlyphs">0,40</text>
<text x="1463.4" y="777" font-size="18" fill="#f4f4f4" textLength="37.5" lengthAdjust="spacingAndGlyphs">0,42</text>
<rect x="1005" y="783.9" width="526.6" height="29.1" fill="#404040"/>
<rect x="1005" y="783.9" width="17.1" height="29.1" fill="url(#g40)"/>
<text x="1027.4" y="806.1" font-size="18" fill="#f4f4f4" textLength="127.5" lengthAdjust="spacingAndGlyphs">Target y:CIE31</text>
<text x="1169.3" y="806.1" font-size="18" fill="#f4f4f4" textLength="37.5" lengthAdjust="spacingAndGlyphs">0,36</text>
<text x="1242.8" y="806.1" font-size="18" fill="#f4f4f4" textLength="37.5" lengthAdjust="spacingAndGlyphs">0,40</text>
<text x="1316.4" y="806.1" font-size="18" fill="#f4f4f4" textLength="37.5" lengthAdjust="spacingAndGlyphs">0,44</text>
<text x="1389.9" y="806.1" font-size="18" fill="#f4f4f4" textLength="37.5" lengthAdjust="spacingAndGlyphs">0,47</text>
<text x="1463.4" y="806.1" font-size="18" fill="#f4f4f4" textLength="37.5" lengthAdjust="spacingAndGlyphs">0,51</text>
<rect x="1005" y="813" width="526.6" height="29.5" fill="#808080"/>
<rect x="1005" y="813" width="17.1" height="29.5" fill="url(#g40)"/>
<text x="1027.4" y="835.2" font-size="18" fill="#f4f4f4" textLength="73" lengthAdjust="spacingAndGlyphs">Target Y</text>
<text x="1169.3" y="835.2" font-size="18" fill="#f4f4f4" textLength="60.5" lengthAdjust="spacingAndGlyphs">127,58</text>
<text x="1242.8" y="835.2" font-size="18" fill="#f4f4f4" textLength="60.5" lengthAdjust="spacingAndGlyphs">125,34</text>
<text x="1316.4" y="835.2" font-size="18" fill="#f4f4f4" textLength="60.5" lengthAdjust="spacingAndGlyphs">123,62</text>
<text x="1389.9" y="835.2" font-size="18" fill="#f4f4f4" textLength="60.5" lengthAdjust="spacingAndGlyphs">122,27</text>
<text x="1463.4" y="835.2" font-size="18" fill="#f4f4f4" textLength="60.5" lengthAdjust="spacingAndGlyphs">120,96</text>
</svg>
<div style="position:absolute;left:1514.8px;top:66px;width:196.2px;height:194.4px;background:#323232"></div>
<div class="c" style="left:1040px;top:70px;width:667px;height:520px"><div class="l" style="clip-path:polygon(137.92px 516.92px,135.26px 516.61px,132.86px 515.15px,130.65px 513.58px,128.17px 511.85px,125.57px 510.07px,123.21px 508.46px,120.51px 506.6px,117.43px 504.35px,115.15px 502.57px,112.71px 500.54px,110.1px 498.18px,107.22px 495.27px,103.94px 491.56px,102.12px 489.34px,100.2px 486.88px,98.17px 484.16px,96.07px 481.2px,93.87px 477.95px,91.57px 474.38px,89.16px 470.46px,86.63px 466.16px,83.98px 461.42px,81.21px 456.22px,78.31px 450.56px,75.27px 444.39px,72.08px 437.72px,68.73px 430.52px,65.23px 422.74px,61.6px 414.34px,57.88px 405.28px,54.12px 395.55px,50.37px 385.17px,46.66px 374.14px,42.96px 362.46px,39.28px 350.12px,35.59px 337.11px,31.9px 323.47px,28.28px 309.26px,24.75px 294.57px,21.36px 279.49px,18.15px 264.12px,15.17px 248.59px,12.43px 232.97px,9.98px 217.31px,7.83px 201.69px,5.99px 186.18px,4.5px 170.9px,3.38px 155.99px,2.67px 141.52px,2.39px 127.53px,2.57px 114.01px,3.19px 100.94px,4.28px 88.41px,5.85px 76.49px,7.93px 65.28px,10.53px 54.88px,13.62px 45.32px,17.18px 36.63px,21.18px 28.9px,25.59px 22.19px,30.39px 16.55px,35.54px 11.98px,40.98px 8.4px,46.66px 5.76px,52.54px 3.99px,58.57px 3.04px,64.73px 2.86px,71px 3.36px,77.36px 4.41px,83.79px 5.91px,90.26px 7.75px,96.77px 9.88px,103.28px 12.26px,109.77px 14.84px,116.18px 17.56px,122.5px 20.36px,128.72px 23.23px,134.84px 26.16px,140.89px 29.15px,146.89px 32.23px,152.84px 35.39px,158.75px 38.63px,164.61px 41.95px,170.45px 45.33px,176.26px 48.79px,182.05px 52.32px,187.82px 55.91px,193.59px 59.58px,199.33px 63.3px,205.07px 67.09px,210.79px 70.92px,216.5px 74.8px,222.2px 78.73px,227.9px 82.7px,233.59px 86.72px,239.28px 90.77px,244.96px 94.86px,250.65px 98.98px,256.34px 103.13px,262.02px 107.31px,267.7px 111.51px,273.39px 115.74px,279.07px 119.99px,284.76px 124.26px,290.44px 128.54px,296.12px 132.84px,301.79px 137.15px,307.47px 141.46px,313.13px 145.79px,318.79px 150.11px,324.45px 154.44px,330.09px 158.78px,335.72px 163.11px,341.34px 167.44px,346.94px 171.76px,352.53px 176.08px,358.1px 180.39px,363.64px 184.68px,369.16px 188.96px,374.66px 193.23px,380.13px 197.47px,385.56px 201.7px,390.96px 205.9px,396.32px 210.07px,401.65px 214.21px,406.93px 218.31px,412.16px 222.38px,417.35px 226.41px,422.49px 230.4px,427.58px 234.35px,432.61px 238.25px,437.57px 242.1px,442.47px 245.9px,447.3px 249.64px,452.06px 253.34px,456.75px 256.98px,461.36px 260.56px,465.89px 264.09px,470.32px 267.54px,474.64px 270.91px,478.83px 274.17px,482.89px 277.33px,486.82px 280.38px,490.63px 283.34px,494.36px 286.23px,497.99px 289.06px,501.56px 291.82px,505.04px 294.53px,508.42px 297.15px,511.7px 299.69px,514.85px 302.14px,517.86px 304.47px,520.76px 306.71px,523.54px 308.86px,526.21px 310.92px,528.78px 312.91px,531.25px 314.83px,533.63px 316.67px,535.9px 318.44px,538.08px 320.14px,540.16px 321.76px,542.15px 323.31px,545.86px 326.2px,549.25px 328.83px,552.33px 331.22px,555.16px 333.41px,557.74px 335.41px,560.1px 337.24px,562.29px 338.94px,564.35px 340.54px,567.16px 342.72px,569.64px 344.66px,571.83px 346.36px,574.31px 348.29px,576.66px 350.12px,578.78px 351.77px,580.87px 353.39px,582.88px 354.96px,583.58px 355.51px);isolation:isolate"><div class="l" style="background:conic-gradient(from 0deg at 118.8px 482.8px,#00ffff 0deg,#00ffff 18.3deg,#00ffff 19.4deg,#00ffff 19.65deg,#18ffff 22.1deg,#33ffff 24.55deg,#50ffff 27deg,#65ffff 28.65deg,#7bffff 30.3deg,#94ffff 31.95deg,#afffff 33.6deg,#ccffff 35.25deg,#ecffff 36.9deg,#fcffff 37.65deg,#ffffff 37.8deg,#ffe9ff 38.9deg,#ffd4ff 40deg,#ffc2ff 41.1deg,#ffb2ff 42.2deg,#ff9cff 43.85deg,#ff88ff 45.5deg,#ff77ff 47.15deg,#ff68ff 48.8deg,#ff54ff 51.25deg,#ff42ff 53.7deg,#ff33ff 56.15deg,#ff25ff 58.6deg,#ff13ff 62.25deg,#ff03ff 65.9deg,#ff00ff 66.65deg,#ff00ff 159.2deg,#ff00ff 186.65deg,#ff00ff 198.85deg,#ff00ff 199.6deg,#0000ff 199.65deg,#0000ff 240.8deg,#0000ff 246.25deg,#0000ff 246.6deg,#0000ff 246.7deg,#00ffff 246.75deg,#00ffff 339.3deg,#00ffff 357.6deg,#00ffff 359.25deg,#00ffff 360deg)"></div><div class="l" style="background:conic-gradient(from 0deg at 238.0px 148.0px,#00ff00 0deg,#00ff00 18.3deg,#00ff00 19.4deg,#00ff00 19.6deg,#ffff00 19.65deg,#ffff00 112.2deg,#ffff00 120.35deg,#ffff00 121.45deg,#ffff01 122.2deg,#ffff13 130.35deg,#ffff28 138.5deg,#ffff38 143.95deg,#ffff4a 149.4deg,#ffff57 153.05deg,#ffff67 156.7deg,#ffff78 160.35deg,#ffff86 162.8deg,#ffff95 165.25deg,#ffffa6 167.7deg,#ffffba 170.15deg,#ffffc9 171.8deg,#ffffda 173.45deg,#ffffec 175.1deg,#fffffa 176.2deg,#ffffff 176.55deg,#dfffff 179deg,#c0ffff 181.45deg,#95ffff 185.1deg,#6dffff 188.75deg,#47ffff 192.4deg,#11ffff 197.85deg,#01ffff 199.5deg,#00ffff 199.65deg,#00ffff 292.2deg,#00ffff 300.35deg,#00ffff 301.45deg,#00ffff 301.7deg,#00ffff 301.75deg,#00ff00 301.8deg,#00ff00 342.95deg,#00ff00 355.15deg,#00ff00 358.8deg,#00ff00 359.9deg,#00ff00 360deg);mix-blend-mode:darken"></div><div class="l" style="background:conic-gradient(from 0deg at 508.3px 315.4px,#ffff00 0deg,#ffff00 61.7deg,#ffff00 65.35deg,#ffff00 66.45deg,#ffff00 66.7deg,#ff0000 66.75deg,#ff0000 107.9deg,#ff0000 120.1deg,#ff0000 121.75deg,#ff00ff 121.8deg,#ff00ff 214.35deg,#ff00ff 241.8deg,#ff00ff 245.45deg,#ff00ff 246.55deg,#ff00ff 246.8deg,#ff1cff 250.45deg,#ff31ff 252.9deg,#ff47ff 255.35deg,#ff5fff 257.8deg,#ff79ff 260.25deg,#ff96ff 262.7deg,#ffabff 264.35deg,#ffc2ff 266deg,#ffdaff 267.65deg,#fff5ff 269.3deg,#fffeff 269.8deg,#fffffe 269.9deg,#ffffec 271deg,#ffffd3 272.65deg,#ffffbd 274.3deg,#ffffa9 275.95deg,#ffff97 277.6deg,#ffff87 279.25deg,#ffff71 281.7deg,#ffff5e 284.15deg,#ffff4d 286.6deg,#ffff3e 289.05deg,#ffff2a 292.7deg,#ffff18 296.35deg,#ffff07 300deg,#ffff00 301.65deg,#ffff00 302.4deg,#ffff00 343.55deg,#ffff00 355.75deg,#ffff00 359.4deg,#ffff00 359.9deg,#ffff00 360deg);mix-blend-mode:darken"></div><div class="l" style="background:#999;mix-blend-mode:multiply;clip-path:polygon(evenodd,-20000px -20000px,20000px -20000px,20000px 20000px,-20000px 20000px,-20000px -20000px,508.3px 315.4px,238px 148px,118.75px 482.8px,508.3px 315.4px,-20000px -20000px)"></div></div></div>
<div class="c" style="left:1517px;top:69px;width:191px;height:190px"><div class="l" style="isolation:isolate"><div class="l" style="background:conic-gradient(from 0deg at -927.6px 1787.1px,#00ffff 0deg,#00ffff 12.2deg,#00ffff 14.65deg,#00ffff 15.4deg,#00ffff 15.55deg,#1effff 18deg,#3effff 20.45deg,#56ffff 22.1deg,#6fffff 23.75deg,#8bffff 25.4deg,#a8ffff 27.05deg,#c9ffff 28.7deg,#e0ffff 29.8deg,#f9ffff 30.9deg,#ffffff 31.15deg,#fff7ff 31.5deg,#ffe0ff 32.6deg,#ffcbff 33.7deg,#ffb9ff 34.8deg,#ffa9ff 35.9deg,#ff9aff 37deg,#ff86ff 38.65deg,#ff75ff 40.3deg,#ff66ff 41.95deg,#ff52ff 44.4deg,#ff41ff 46.85deg,#ff33ff 49.3deg,#ff26ff 51.75deg,#ff15ff 55.4deg,#ff07ff 59.05deg,#ff02ff 60.7deg,#ff00ff 61.2deg,#ff00ff 153.75deg,#ff00ff 194.9deg,#ff00ff 195.4deg,#ff00ff 195.5deg,#0000ff 195.55deg,#0000ff 236.7deg,#0000ff 240.35deg,#0000ff 241.1deg,#00ffff 241.15deg,#00ffff 333.7deg,#00ffff 352deg,#00ffff 357.45deg,#00ffff 359.9deg,#00ffff 360deg)"></div><div class="l" style="background:conic-gradient(from 0deg at -357.6px -264.9px,#00ff00 0deg,#00ff00 12.2deg,#00ff00 14.65deg,#00ff00 15.4deg,#00ff00 15.5deg,#ffff00 15.55deg,#ffff00 108.1deg,#ffff00 126.4deg,#ffff00 128.05deg,#ffff01 128.8deg,#ffff12 136.95deg,#ffff20 142.4deg,#ffff30 147.85deg,#ffff3c 151.5deg,#ffff49 155.15deg,#ffff59 158.8deg,#ffff66 161.25deg,#ffff74 163.7deg,#ffff84 166.15deg,#ffff97 168.6deg,#ffffa5 170.25deg,#ffffb6 171.9deg,#ffffc8 173.55deg,#ffffd6 174.65deg,#ffffe6 175.75deg,#fffff7 176.85deg,#fffffd 177.2deg,#ffffff 177.3deg,#d6ffff 179.75deg,#b0ffff 182.2deg,#8bffff 184.65deg,#69ffff 187.1deg,#49ffff 189.55deg,#1cffff 193.2deg,#08ffff 194.85deg,#02ffff 195.35deg,#00ffff 195.55deg,#00ffff 288.1deg,#00ffff 306.4deg,#00ffff 308.05deg,#00ffff 308.4deg,#00ffff 308.45deg,#00ff00 308.5deg,#00ff00 349.65deg,#00ff00 357.8deg,#00ff00 359.45deg,#00ff00 359.95deg,#00ff00 360deg);mix-blend-mode:darken"></div><div class="l" style="background:conic-gradient(from 0deg at 934.4px 761.1px,#ffff00 0deg,#ffff00 41.15deg,#ffff00 59.45deg,#ffff00 61.1deg,#ff0000 61.15deg,#ff0000 122.85deg,#ff0000 128.3deg,#ff0000 128.45deg,#ff00ff 128.5deg,#ff00ff 221.05deg,#ff00ff 239.35deg,#ff00ff 241deg,#ff01ff 241.25deg,#ff18ff 244.9deg,#ff31ff 248.55deg,#ff4cff 252.2deg,#ff6aff 255.85deg,#ff7fff 258.3deg,#ff96ff 260.75deg,#ffafff 263.2deg,#ffcaff 265.65deg,#ffe8ff 268.1deg,#fffeff 269.75deg,#fffffe 269.9deg,#ffffe9 271.55deg,#ffffd5 273.2deg,#ffffc4 274.85deg,#ffffac 277.3deg,#ffff97 279.75deg,#ffff84 282.2deg,#ffff73 284.65deg,#ffff5c 288.3deg,#ffff48 291.95deg,#ffff36 295.6deg,#ffff1d 301.05deg,#ffff07 306.5deg,#ffff01 308.15deg,#ffff00 308.5deg,#ffff00 349.65deg,#ffff00 357.8deg,#ffff00 359.45deg,#ffff00 359.95deg,#ffff00 360deg);mix-blend-mode:darken"></div><div class="l" style="background:#999;mix-blend-mode:multiply;clip-path:polygon(evenodd,-20000px -20000px,20000px -20000px,20000px 20000px,-20000px 20000px,-20000px -20000px,934.36px 761.14px,-357.64px -264.86px,-927.64px 1787.14px,934.36px 761.14px,-20000px -20000px)"></div></div></div>
<svg width="1719" height="887" viewBox="0 0 1719 887">
<path d="M1038.8 69H1514.8" stroke="#8e8e8e" stroke-width="1.6"/>
<path d="M1039.5 69V590" stroke="#8e8e8e" stroke-width="1.4"/>
<path d="M1038.8 590.2H1708.1" stroke="#8e8e8e" stroke-width="1.8"/>
<path d="M1707.4 260.8V590" stroke="#8e8e8e" stroke-width="1.4"/>
<path d="M1514.8 66V262.5H1712" fill="none" stroke="#323232" stroke-width="0"/>
<rect x="1517.7" y="69.8" width="189.7" height="188.6" fill="none" stroke="#9a9a9a" stroke-width="1.4"/>
<rect x="1267.35" y="379.05" width="13.9" height="13.9" fill="none" stroke="#fff" stroke-width="1.35"/>
<rect x="1253.65" y="379.05" width="13.9" height="13.9" fill="none" stroke="#fff" stroke-width="1.35"/>
<rect x="1239.95" y="379.05" width="13.9" height="13.9" fill="none" stroke="#fff" stroke-width="1.35"/>
<rect x="1225.85" y="379.05" width="13.9" height="13.9" fill="none" stroke="#fff" stroke-width="1.35"/>
<rect x="1211.45" y="379.05" width="13.9" height="13.9" fill="none" stroke="#fff" stroke-width="1.35"/>
<rect x="1332.15" y="378.65" width="13.9" height="13.9" fill="none" stroke="#fff" stroke-width="1.35"/>
<rect x="1385.15" y="377.65" width="13.9" height="13.9" fill="none" stroke="#fff" stroke-width="1.35"/>
<rect x="1433.05" y="377.65" width="13.9" height="13.9" fill="none" stroke="#fff" stroke-width="1.35"/>
<rect x="1483.65" y="377.65" width="13.9" height="13.9" fill="none" stroke="#fff" stroke-width="1.35"/>
<rect x="1540.95" y="377.65" width="13.9" height="13.9" fill="none" stroke="#fff" stroke-width="1.35"/>
<rect x="1278.65" y="344.95" width="13.9" height="13.9" fill="none" stroke="#fff" stroke-width="1.35"/>
<rect x="1277.15" y="311.65" width="13.9" height="13.9" fill="none" stroke="#fff" stroke-width="1.35"/>
<rect x="1274.65" y="279.55" width="13.9" height="13.9" fill="none" stroke="#fff" stroke-width="1.35"/>
<rect x="1273.05" y="247.05" width="13.9" height="13.9" fill="none" stroke="#fff" stroke-width="1.35"/>
<rect x="1270.05" y="210.55" width="13.9" height="13.9" fill="none" stroke="#fff" stroke-width="1.35"/>
<rect x="1254.55" y="412.65" width="13.9" height="13.9" fill="none" stroke="#fff" stroke-width="1.35"/>
<rect x="1229.45" y="444.55" width="13.9" height="13.9" fill="none" stroke="#fff" stroke-width="1.35"/>
<rect x="1204.55" y="477.05" width="13.9" height="13.9" fill="none" stroke="#fff" stroke-width="1.35"/>
<rect x="1179.15" y="509.65" width="13.9" height="13.9" fill="none" stroke="#fff" stroke-width="1.35"/>
<rect x="1151.15" y="545.55" width="13.9" height="13.9" fill="none" stroke="#fff" stroke-width="1.35"/>
<rect x="1282.65" y="400.05" width="13.9" height="13.9" fill="none" stroke="#fff" stroke-width="1.35"/>
<rect x="1284.15" y="422.45" width="13.9" height="13.9" fill="none" stroke="#fff" stroke-width="1.35"/>
<rect x="1284.15" y="442.05" width="13.9" height="13.9" fill="none" stroke="#fff" stroke-width="1.35"/>
<rect x="1285.65" y="464.55" width="13.9" height="13.9" fill="none" stroke="#fff" stroke-width="1.35"/>
<rect x="1287.05" y="487.05" width="13.9" height="13.9" fill="none" stroke="#fff" stroke-width="1.35"/>
<rect x="1298.15" y="356.55" width="13.9" height="13.9" fill="none" stroke="#fff" stroke-width="1.35"/>
<rect x="1315.05" y="334.05" width="13.9" height="13.9" fill="none" stroke="#fff" stroke-width="1.35"/>
<rect x="1332.15" y="311.65" width="13.9" height="13.9" fill="none" stroke="#fff" stroke-width="1.35"/>
<rect x="1347.65" y="292.05" width="13.9" height="13.9" fill="none" stroke="#fff" stroke-width="1.35"/>
<rect x="1365.55" y="269.45" width="13.9" height="13.9" fill="none" stroke="#fff" stroke-width="1.35"/>
<rect x="1281.7" y="379.1" width="13.8" height="13.8" fill="none" stroke="#000" stroke-width="1.8"/>
<circle cx="1277" cy="394" r="4.35" fill="#a0bebe" stroke="#000" stroke-width="1.1"/>
<circle cx="1267.1" cy="395.9" r="4.35" fill="#82bebe" stroke="#000" stroke-width="1.1"/>
<circle cx="1257.5" cy="396.9" r="4.35" fill="#64bebe" stroke="#000" stroke-width="1.1"/>
<circle cx="1247.9" cy="396.8" r="4.35" fill="#50bebe" stroke="#000" stroke-width="1.1"/>
<circle cx="1236.5" cy="396.9" r="4.35" fill="#00bebe" stroke="#000" stroke-width="1.1"/>
<circle cx="1322" cy="391.5" r="4.35" fill="#be8282" stroke="#000" stroke-width="1.1"/>
<circle cx="1361" cy="387" r="4.35" fill="#be6464" stroke="#000" stroke-width="1.1"/>
<circle cx="1398" cy="382.9" r="4.35" fill="#be4b4b" stroke="#000" stroke-width="1.1"/>
<circle cx="1440.1" cy="378.9" r="4.35" fill="#be3232" stroke="#000" stroke-width="1.1"/>
<circle cx="1476" cy="376.1" r="4.35" fill="#be0000" stroke="#000" stroke-width="1.1"/>
<circle cx="1291.1" cy="365.8" r="4.35" fill="#9bbe9b" stroke="#000" stroke-width="1.1"/>
<circle cx="1297" cy="337" r="4.35" fill="#7dbe7d" stroke="#000" stroke-width="1.1"/>
<circle cx="1302" cy="306" r="4.35" fill="#64be64" stroke="#000" stroke-width="1.1"/>
<circle cx="1308" cy="273.8" r="4.35" fill="#4bbe4b" stroke="#000" stroke-width="1.1"/>
<circle cx="1312" cy="238.3" r="4.35" fill="#00be00" stroke="#000" stroke-width="1.1"/>
<circle cx="1262" cy="425.1" r="4.35" fill="#a0a0be" stroke="#000" stroke-width="1.1"/>
<circle cx="1237.8" cy="452.9" r="4.35" fill="#8282be" stroke="#000" stroke-width="1.1"/>
<circle cx="1217" cy="480.8" r="4.35" fill="#6464be" stroke="#000" stroke-width="1.1"/>
<circle cx="1193" cy="508.9" r="4.35" fill="#5050be" stroke="#000" stroke-width="1.1"/>
<circle cx="1170.5" cy="538.8" r="4.35" fill="#0000be" stroke="#000" stroke-width="1.1"/>
<circle cx="1283" cy="412.4" r="4.35" fill="#bea0be" stroke="#000" stroke-width="1.1"/>
<circle cx="1279.9" cy="432.1" r="4.35" fill="#be82be" stroke="#000" stroke-width="1.1"/>
<circle cx="1277" cy="447.6" r="4.35" fill="#be6cbe" stroke="#000" stroke-width="1.1"/>
<circle cx="1273.9" cy="467" r="4.35" fill="#be50be" stroke="#000" stroke-width="1.1"/>
<circle cx="1271.5" cy="487" r="4.35" fill="#be00be" stroke="#000" stroke-width="1.1"/>
<circle cx="1304" cy="373" r="4.35" fill="#bebea2" stroke="#000" stroke-width="1.1"/>
<circle cx="1321.1" cy="351.9" r="4.35" fill="#bebe8c" stroke="#000" stroke-width="1.1"/>
<circle cx="1337.5" cy="330.9" r="4.35" fill="#bebe73" stroke="#000" stroke-width="1.1"/>
<circle cx="1356" cy="308.9" r="4.35" fill="#bebe55" stroke="#000" stroke-width="1.1"/>
<circle cx="1373.9" cy="284.8" r="4.35" fill="#bebe00" stroke="#000" stroke-width="1.1"/>
<ellipse cx="1288.1" cy="391.3" rx="3.9" ry="3.4" fill="#fff" stroke="#000" stroke-width="1.3"/>
<rect x="1604.8" y="156.3" width="14.2" height="14.2" fill="none" stroke="#fff" stroke-width="1.4"/>
<circle cx="1617.7" cy="220.7" r="4.35" fill="#c0be0a" stroke="#000" stroke-width="1.1"/>
</svg>
</div></body></html>
